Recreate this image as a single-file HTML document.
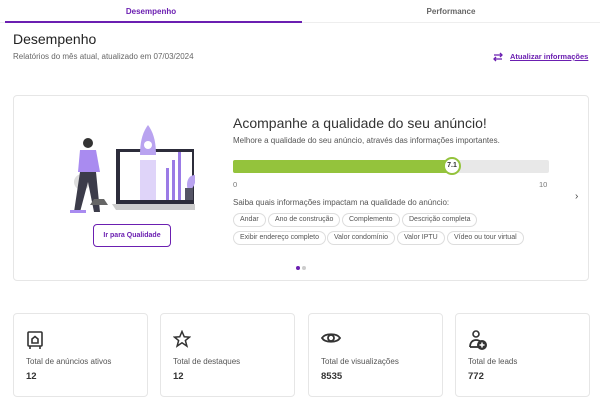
<!DOCTYPE html><html><head><style>
*{margin:0;padding:0;box-sizing:border-box}
body{width:600px;height:402px;background:#fff;font-family:"Liberation Sans",sans-serif;position:relative;overflow:hidden;color:#333}
.a{position:absolute}
.chip{position:absolute;height:14px;border:1px solid #ddd;border-radius:8px;font-size:7px;color:#555;line-height:12px;padding:0 6px;white-space:nowrap}
.card{position:absolute;top:313px;width:135px;height:84px;border:1px solid #e6e6e6;border-radius:4px}
.card .l{position:absolute;left:12px;top:43px;font-size:8px;color:#555}
.card .v{position:absolute;left:12px;top:57px;font-size:9.5px;font-weight:bold;color:#333}
.card svg{position:absolute;left:12px;top:16px}
</style></head><body>
<div class="a" style="left:0;top:22px;width:600px;height:1px;background:#eee"></div>
<div class="a" style="left:5px;top:21px;width:297px;height:2px;background:#6b1fb1"></div>
<div class="a" style="left:0;width:302px;top:7px;text-align:center;font-size:8px;font-weight:bold;color:#6b1fb1">Desempenho</div>
<div class="a" style="left:302px;width:298px;top:7px;text-align:center;font-size:8px;font-weight:bold;color:#666">Performance</div>
<div class="a" style="left:13px;top:31px;font-size:14px;color:#222">Desempenho</div>
<div class="a" style="left:13px;top:52px;font-size:8px;color:#666">Relatórios do mês atual, atualizado em 07/03/2024</div>
<svg class="a" style="left:492px;top:51px" width="12" height="12" viewBox="0 0 12 12" fill="none" stroke="#6b1fb1" stroke-width="1.3"><path d="M2 4h8M8 2l2 2-2 2M10 8H2M4 6l-2 2 2 2"/></svg>
<div class="a" style="left:510px;top:52px;font-size:7.5px;font-weight:bold;color:#6b1fb1;text-decoration:underline">Atualizar informações</div>
<div class="a" style="left:13px;top:95px;width:576px;height:186px;border:1px solid #e6e6e6;border-radius:4px"></div>
<svg class="a" style="left:60px;top:120px" width="135" height="100" viewBox="0 0 135 100">
<circle cx="22" cy="62" r="8" fill="#ddd"/>
<rect x="56" y="29" width="78" height="55" fill="#2c2c3a"/>
<rect x="60" y="32" width="72" height="48" fill="#fff"/>
<path d="M52 84h88l-4 6H56z" fill="#ccc"/>
<path d="M88 5c-6 8-8 18-8 30h16c0-12-2-22-8-30z" fill="#b9a3f0"/>
<circle cx="88" cy="25" r="4" fill="#fff"/>
<rect x="80" y="40" width="16" height="40" fill="#c9b8f5" opacity=".6"/>
<rect x="112" y="40" width="3" height="40" fill="#9b7be6"/><rect x="118" y="32" width="3" height="48" fill="#9b7be6"/><rect x="106" y="48" width="3" height="32" fill="#9b7be6"/>
<path d="M135 55c-8 0-10 10-6 18 4-6 8-10 6-18z" fill="#b9a3f0"/><rect x="125" y="68" width="8" height="12" fill="#556"/>
<path d="M20 30h16l4 22H18z" fill="#a98bf0"/>
<circle cx="28" cy="23" r="5" fill="#333"/>
<path d="M20 52l-6 40h6l8-30 6 30h6l-4-40z" fill="#3c3c4a"/>
<path d="M30 85h18l-4-6h-10z" fill="#666"/>
<rect x="10" y="90" width="16" height="3" fill="#a98bf0"/>
</svg>
<div class="a" style="left:93px;top:224px;width:78px;height:23px;border:1px solid #6b1fb1;border-radius:4px;font-size:7px;font-weight:bold;color:#6b1fb1;text-align:center;line-height:21px">Ir para Qualidade</div>
<div class="a" style="left:233px;top:115px;font-size:14px;color:#333">Acompanhe a qualidade do seu anúncio!</div>
<div class="a" style="left:233px;top:136px;font-size:8px;color:#555">Melhore a qualidade do seu anúncio, através das informações importantes.</div>
<div class="a" style="left:233px;top:160px;width:316px;height:13px;background:#e8e8e8;border-radius:2px"></div>
<div class="a" style="left:233px;top:160px;width:218px;height:13px;background:#94c33c;border-radius:2px 0 0 2px"></div>
<div class="a" style="left:443px;top:157px;width:18px;height:18px;border:2px solid #94c33c;border-radius:50%;background:#fff;font-size:7px;font-weight:bold;text-align:center;line-height:14px;color:#333">7.1</div>
<div class="a" style="left:233px;top:180px;font-size:7.5px;color:#777">0</div>
<div class="a" style="left:539px;top:180px;font-size:7.5px;color:#777">10</div>
<div class="a" style="left:233px;top:198px;font-size:8px;color:#555">Saiba quais informações impactam na qualidade do anúncio:</div>
<div class="chip" style="left:233px;top:213px">Andar</div>
<div class="chip" style="left:268px;top:213px">Ano de construção</div>
<div class="chip" style="left:342px;top:213px">Complemento</div>
<div class="chip" style="left:402px;top:213px">Descrição completa</div>
<div class="chip" style="left:233px;top:231px">Exibir endereço completo</div>
<div class="chip" style="left:327px;top:231px">Valor condomínio</div>
<div class="chip" style="left:397px;top:231px">Valor IPTU</div>
<div class="chip" style="left:447px;top:231px">Vídeo ou tour virtual</div>
<div class="a" style="left:575px;top:191px;font-size:10px;color:#444">›</div>
<div class="a" style="left:296px;top:266px;width:4px;height:4px;border-radius:50%;background:#6b1fb1"></div>
<div class="a" style="left:302px;top:266px;width:4px;height:4px;border-radius:50%;background:#ccc"></div>
<div class="card" style="left:13px"><svg width="18" height="20" viewBox="0 0 18 20" fill="none" stroke="#333" stroke-width="1.6"><rect x="2" y="2" width="14" height="14" rx="1"/><path d="M6 13V9l3-2.5L12 9v4z"/><path d="M4 16v3M14 16v3"/></svg><div class="l">Total de anúncios ativos</div><div class="v">12</div></div>
<div class="card" style="left:160px"><svg width="18" height="18" viewBox="0 0 24 24" fill="none" stroke="#333" stroke-width="2"><path d="M12 2l3 7 7 .5-5.5 4.5 2 7.5L12 17l-6.5 4.5 2-7.5L2 9.5 9 9z"/></svg><div class="l">Total de destaques</div><div class="v">12</div></div>
<div class="card" style="left:308px"><svg width="20" height="16" viewBox="0 0 20 16" fill="none" stroke="#333" stroke-width="1.8"><path d="M1 8c3-5 15-5 18 0-3 5-15 5-18 0z"/><circle cx="10" cy="8" r="3"/></svg><div class="l">Total de visualizações</div><div class="v">8535</div></div>
<div class="card" style="left:455px"><svg width="20" height="20" viewBox="0 0 20 20"><circle cx="8" cy="4" r="3" fill="none" stroke="#333" stroke-width="1.6"/><path d="M2 17c0-5 3-7 6-7s4 1 5 2" fill="none" stroke="#333" stroke-width="1.8"/><path d="M2 17h8" stroke="#333" stroke-width="1.8"/><circle cx="14" cy="15" r="5" fill="#333"/><path d="M14 12.5v5M11.5 15h5" stroke="#fff" stroke-width="1.5"/></svg><div class="l">Total de leads</div><div class="v">772</div></div>
</body></html>
